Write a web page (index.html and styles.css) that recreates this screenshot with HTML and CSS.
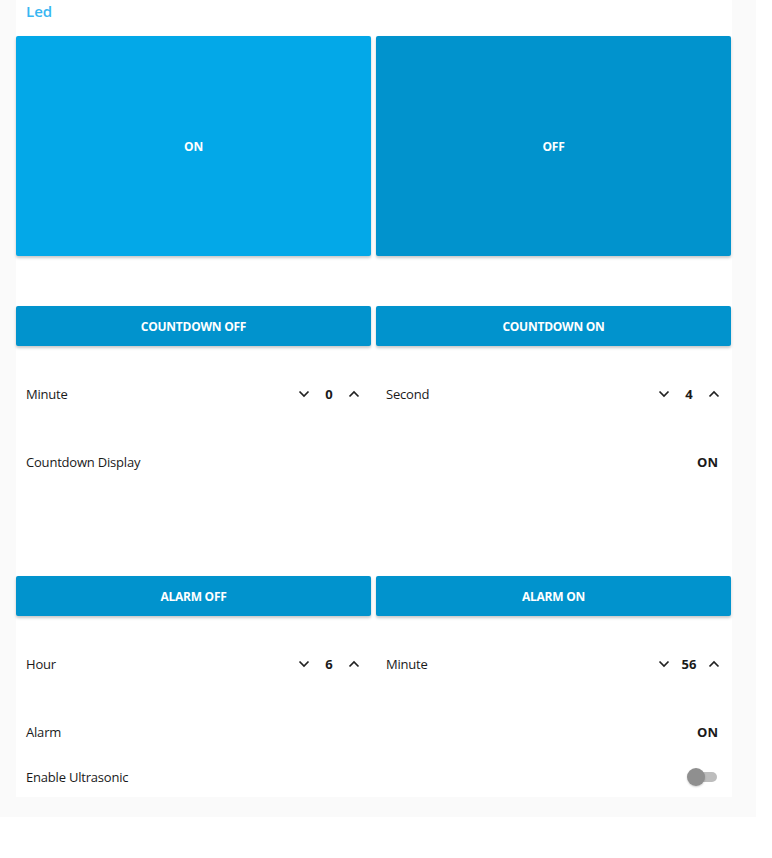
FILE: index.html
```html
<!DOCTYPE html>
<html>
<head>
<meta charset="utf-8">
<link rel="stylesheet" href="styles.css">
</head>
<body>
<div class="panel">
  <div class="card">
    <div class="title">Led</div>
    <div class="grid2">
      <button class="btn big light">ON</button>
      <button class="btn big">OFF</button>
    </div>
    <div class="grid2 sec1">
      <button class="btn bar">COUNTDOWN OFF</button>
      <button class="btn bar">COUNTDOWN ON</button>
    </div>
    <div class="grid2 numrow">
      <div class="row num"><span class="label">Minute</span><span class="spin"><svg class="chev" viewBox="0 0 12 8"><path d="M1.5 1.5 6 6 10.5 1.5"/></svg><b class="val">0</b><svg class="chev" viewBox="0 0 12 8"><path d="M1.5 6.5 6 2 10.5 6.5"/></svg></span></div>
      <div class="row num"><span class="label">Second</span><span class="spin"><svg class="chev" viewBox="0 0 12 8"><path d="M1.5 1.5 6 6 10.5 1.5"/></svg><b class="val">4</b><svg class="chev" viewBox="0 0 12 8"><path d="M1.5 6.5 6 2 10.5 6.5"/></svg></span></div>
    </div>
    <div class="row full disp"><span class="label">Countdown Display</span><b class="state">ON</b></div>
    <div class="grid2 sec2">
      <button class="btn bar">ALARM OFF</button>
      <button class="btn bar">ALARM ON</button>
    </div>
    <div class="grid2 numrow">
      <div class="row num"><span class="label">Hour</span><span class="spin"><svg class="chev" viewBox="0 0 12 8"><path d="M1.5 1.5 6 6 10.5 1.5"/></svg><b class="val">6</b><svg class="chev" viewBox="0 0 12 8"><path d="M1.5 6.5 6 2 10.5 6.5"/></svg></span></div>
      <div class="row num"><span class="label">Minute</span><span class="spin"><svg class="chev" viewBox="0 0 12 8"><path d="M1.5 1.5 6 6 10.5 1.5"/></svg><b class="val">56</b><svg class="chev" viewBox="0 0 12 8"><path d="M1.5 6.5 6 2 10.5 6.5"/></svg></span></div>
    </div>
    <div class="row full alarm"><span class="label">Alarm</span><b class="state">ON</b></div>
    <div class="row full ultra"><span class="label">Enable Ultrasonic</span><span class="toggle"><span class="track"></span><span class="thumb"></span></span></div>
  </div>
</div>
</body>
</html>
```
FILE: styles.css
```css
* { box-sizing: border-box; }
body {
  margin: 0;
  background: #fff;
  font-family: "Open Sans", "Noto Sans", sans-serif;
  color: #1a1a1a;
}
.panel {
  width: 756px;
  background: #fafafa;
  padding: 0 24px 20px 16px;
}
.card {
  background: #fff;
  width: 716px;
}
.title {
  height: 36px;
  padding: 1px 0 0 10px;
  font-size: 15px;
  font-weight: 600;
  color: #38b6f2;
  line-height: 20px;
}
.grid2 {
  display: grid;
  grid-template-columns: 355px 355px;
  column-gap: 5px;
}
.btn {
  border: none;
  border-radius: 2px;
  background: #0193cd;
  color: #fff;
  font-family: inherit;
  font-weight: 700;
  font-size: 12px;
  letter-spacing: -0.25px;
  box-shadow: 0 2px 3px rgba(0,0,0,0.22);
  padding: 0;
}
.btn.light { background: #03a8e8; }
.big { height: 220px; }
.bar { height: 40px; }
.sec1 { margin-top: 50px; }
.numrow { margin-top: 24px; }
.row {
  display: flex;
  align-items: center;
  justify-content: space-between;
  height: 48px;
  padding: 0 14px 0 10px;
  font-size: 13px;
}
.row.num { padding-right: 11px; }
.label { letter-spacing: -0.2px; }
.spin {
  display: flex;
  align-items: center;
}
.chev {
  width: 12px;
  height: 8px;
  fill: none;
  stroke: #222;
  stroke-width: 1.7;
}
.val {
  font-weight: 700;
  width: 38px;
  text-align: center;
}
.state { font-weight: 700; font-size: 13px; }
.disp { margin-top: 20px; }
.sec2 { margin-top: 90px; }
.alarm { margin-top: 20px; }
.ultra { height: 40px; margin-top: 1px; }
.toggle {
  position: relative;
  width: 32px;
  height: 18px;
  margin-right: -1px;
}
.track {
  position: absolute;
  left: 4px;
  top: 4px;
  width: 26px;
  height: 10px;
  border-radius: 5px;
  background: #bdbdbd;
}
.thumb {
  position: absolute;
  left: 0;
  top: 0;
  width: 18px;
  height: 18px;
  border-radius: 50%;
  background: #8f8f8f;
  box-shadow: 0 1px 2px rgba(0,0,0,0.2);
}
```
